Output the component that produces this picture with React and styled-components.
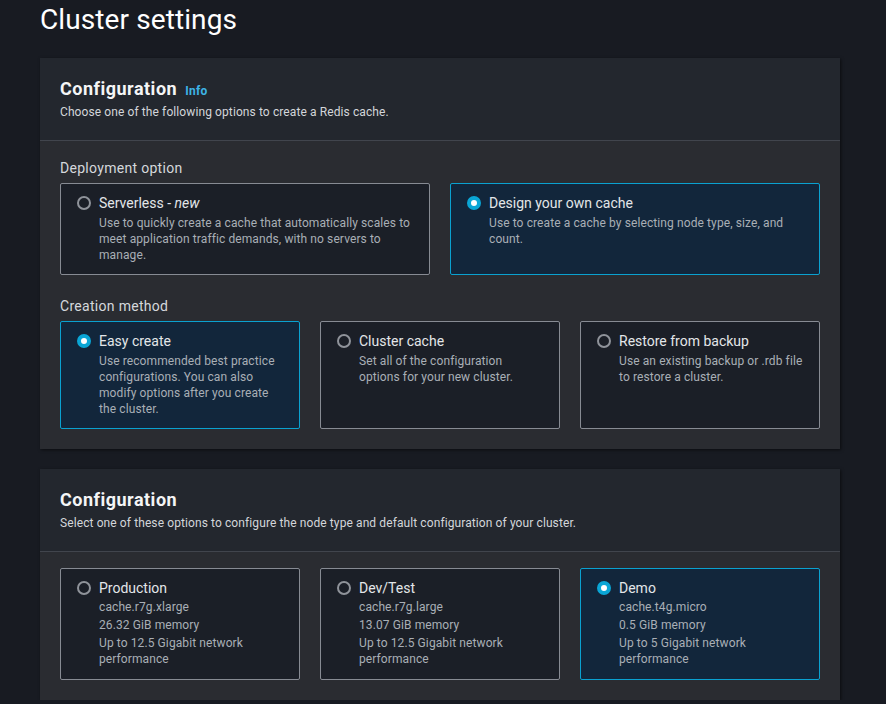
import React from "react";
import styled, { createGlobalStyle } from "styled-components";

const Global = createGlobalStyle`
  html, body { margin: 0; padding: 0; background: #181b22; }
  body { font-family: Roboto, "Noto Sans", "Liberation Sans", sans-serif; -webkit-font-smoothing: antialiased; }
  * { box-sizing: border-box; }
`;

const Page = styled.div`
  padding: 2px 46px 0 40px;
  background: #181b22;
`;

const Title = styled.h1`
  margin: 0 0 20px;
  font-size: 28px;
  line-height: 36px;
  font-weight: 400;
  letter-spacing: 0.1px;
  color: #ffffff;
`;

const Container = styled.section`
  width: 800px;
  box-shadow: 1px 1px 3px rgba(0, 0, 0, 0.55);
  & + & { margin-top: 20px; }
`;

const Header = styled.div`
  background: #23272e;
  padding: 20px 20px 20px;
  border-bottom: 1px solid #41454d;
`;

const HeadRow = styled.div`
  display: flex;
  align-items: baseline;
  gap: 8px;
`;

const Heading = styled.h2`
  margin: 0;
  font-size: 18px;
  line-height: 22px;
  font-weight: 700;
  letter-spacing: 0.5px;
  color: #f4f5f6;
`;

const Info = styled.span`
  font-size: 12px;
  font-weight: 700;
  letter-spacing: 0.3px;
  color: #3db4e6;
`;

const HeaderDesc = styled.p`
  margin: 4px 0 0;
  font-size: 12px;
  line-height: 16px;
  letter-spacing: 0.1px;
  color: #d3d6da;
`;

const Body = styled.div`
  background: #2a2c31;
  padding: ${(p) => (p.$tight ? "16px" : "17px")} 20px 20px;
`;

const Field = styled.div`
  & + & { margin-top: 21px; }
`;

const Label = styled.div`
  font-size: 14px;
  line-height: 20px;
  letter-spacing: 0.3px;
  color: #d5d8dc;
  margin-bottom: 5px;
`;

const Tiles = styled.div`
  display: grid;
  grid-template-columns: repeat(${(p) => p.$cols}, 1fr);
  gap: 20px;
`;

const Tile = styled.div`
  display: flex;
  gap: 8px;
  padding: 9px 16px ${(p) => (p.$specs ? "12px" : "11px")};
  border: 1px solid ${(p) => (p.$selected ? "#0aa1d0" : "#878b93")};
  background: ${(p) => (p.$selected ? "#12263b" : "#1b1f27")};
  border-radius: 2px;
`;

const Radio = styled.span`
  flex: none;
  width: 14px;
  height: 14px;
  margin-top: 3px;
  border-radius: 50%;
  border: ${(p) => (p.$on ? "4px solid #0aa6d6" : "2px solid #8f939a")};
  background: ${(p) => (p.$on ? "#ffffff" : "transparent")};
`;

const TileText = styled.div`
  display: flex;
  flex-direction: column;
`;

const TileTitle = styled.div`
  font-size: 14px;
  line-height: 20px;
  color: #e3e6e9;
  margin-bottom: ${(p) => (p.$specs ? "1px" : "2px")};
  em { font-style: italic; }
`;

const TileDesc = styled.div`
  font-size: 12px;
  line-height: 16px;
  letter-spacing: 0.1px;
  color: #a9afb6;
`;

const Spec = styled.div`
  font-size: 12px;
  line-height: 16px;
  letter-spacing: 0.1px;
  color: #a9afb6;
  & + & { margin-top: 2px; }
`;

function Option({ selected, title, desc, specs }) {
  return (
    <Tile $selected={selected} $specs={!!specs}>
      <Radio $on={selected} />
      <TileText>
        <TileTitle $specs={!!specs}>{title}</TileTitle>
        {desc && <TileDesc>{desc}</TileDesc>}
        {specs && specs.map((s) => <Spec key={s}>{s}</Spec>)}
      </TileText>
    </Tile>
  );
}

export default function App() {
  return (
    <>
      <Global />
      <Page>
        <Title>Cluster settings</Title>
        <Container>
          <Header>
            <HeadRow>
              <Heading>Configuration</Heading>
              <Info>Info</Info>
            </HeadRow>
            <HeaderDesc>Choose one of the following options to create a Redis cache.</HeaderDesc>
          </Header>
          <Body>
            <Field>
              <Label>Deployment option</Label>
              <Tiles $cols={2}>
                <Option
                  title={<>Serverless - <em>new</em></>}
                  desc="Use to quickly create a cache that automatically scales to meet application traffic demands, with no servers to manage."
                />
                <Option
                  selected
                  title="Design your own cache"
                  desc="Use to create a cache by selecting node type, size, and count."
                />
              </Tiles>
            </Field>
            <Field>
              <Label>Creation method</Label>
              <Tiles $cols={3}>
                <Option
                  selected
                  title="Easy create"
                  desc="Use recommended best practice configurations. You can also modify options after you create the cluster."
                />
                <Option
                  title="Cluster cache"
                  desc="Set all of the configuration options for your new cluster."
                />
                <Option
                  title="Restore from backup"
                  desc="Use an existing backup or .rdb file to restore a cluster."
                />
              </Tiles>
            </Field>
          </Body>
        </Container>
        <Container>
          <Header>
            <Heading>Configuration</Heading>
            <HeaderDesc>Select one of these options to configure the node type and default configuration of your cluster.</HeaderDesc>
          </Header>
          <Body $tight>
            <Tiles $cols={3}>
              <Option
                title="Production"
                specs={["cache.r7g.xlarge", "26.32 GiB memory", "Up to 12.5 Gigabit network performance"]}
              />
              <Option
                title="Dev/Test"
                specs={["cache.r7g.large", "13.07 GiB memory", "Up to 12.5 Gigabit network performance"]}
              />
              <Option
                selected
                title="Demo"
                specs={["cache.t4g.micro", "0.5 GiB memory", "Up to 5 Gigabit network performance"]}
              />
            </Tiles>
          </Body>
        </Container>
      </Page>
    </>
  );
}
